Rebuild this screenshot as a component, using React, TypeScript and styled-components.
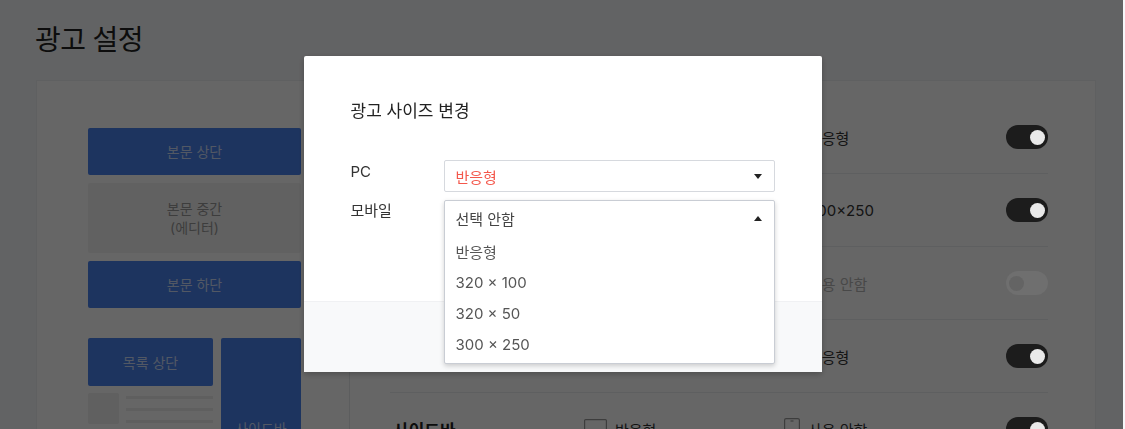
import React from "react";
import styled, { createGlobalStyle } from "styled-components";

const GlobalStyle = createGlobalStyle`
  html, body {
    margin: 0;
    padding: 0;
    width: 1125px;
    height: 429px;
    overflow: hidden;
    background: #f6f7f9;
  }
  body {
    font-family: Inter, "Noto Sans CJK KR", "Noto Sans", sans-serif;
    color: #222;
  }
  * { box-sizing: border-box; }
`;

const Page = styled.div`
  padding: 22px 0 0 35px;
  width: 1125px;
  height: 429px;
  overflow: hidden;
`;

const PageTitle = styled.h1`
  margin: 0 0 22px;
  font-size: 28px;
  line-height: 36px;
  font-weight: 400;
  letter-spacing: -0.6px;
  color: #222;
`;

const Card = styled.div`
  margin-left: 1px;
  width: 1060px;
  height: 480px;
  background: #fff;
  border: 1px solid #edf0f2;
  display: grid;
  grid-template-columns: 313px 1fr;
`;

const Preview = styled.div`
  border-right: 1px solid #e6e9ec;
  padding: 47px 48px 0 51px;
  display: flex;
  flex-direction: column;
`;

const BlockStack = styled.div`
  display: flex;
  flex-direction: column;
  gap: 8px;
`;

const Block = styled.div<{ $h: number; $muted?: boolean }>`
  height: ${(p) => p.$h}px;
  border-radius: 2px;
  background: ${(p) => (p.$muted ? "#f3f3f3" : "#4a82ee")};
  color: ${(p) => (p.$muted ? "#999" : "rgba(255,255,255,0.72)")};
  font-size: 14px;
  line-height: 19px;
  display: flex;
  align-items: center;
  justify-content: center;
  text-align: center;
`;

const ListArea = styled.div`
  margin-top: 30px;
  display: grid;
  grid-template-columns: 125px 80px;
  column-gap: 8px;
  align-items: start;
`;

const ListColumn = styled.div`
  display: flex;
  flex-direction: column;
  gap: 7px;
`;

const ListItem = styled.div`
  display: flex;
  gap: 7px;
`;

const Thumb = styled.div`
  width: 31px;
  height: 31px;
  background: #efefef;
  border-radius: 2px;
`;

const Lines = styled.div`
  flex: 1;
  display: flex;
  flex-direction: column;
  gap: 9px;
  padding-top: 3px;
`;

const Line = styled.div`
  height: 3px;
  background: #eeeeee;
`;

const Settings = styled.div`
  padding: 20px 47px 0 40px;
  display: flex;
  flex-direction: column;
`;

const Row = styled.div`
  height: 73px;
  border-bottom: 1px solid #eceef0;
  display: grid;
  grid-template-columns: 194px 200px 1fr 42px;
  align-items: center;
`;

const RowTitle = styled.div`
  padding-left: 3px;
  font-size: 17px;
  font-weight: 700;
  color: #222;
`;

const Device = styled.div<{ $off?: boolean }>`
  display: flex;
  align-items: center;
  gap: 8px;
  font-size: 15px;
  color: ${(p) => (p.$off ? "#b4b4b4" : "#333")};
`;

const Toggle = styled.div<{ $on: boolean }>`
  position: relative;
  z-index: 20;
  width: 42px;
  height: 24px;
  border-radius: 12px;
  background: ${(p) => (p.$on ? "#1c1c1c" : "#6f6f6f")};
  &::after {
    content: "";
    position: absolute;
    top: 4.5px;
    ${(p) => (p.$on ? "right: 3px;" : "left: 3px;")}
    width: 15px;
    height: 15px;
    border-radius: 50%;
    background: ${(p) => (p.$on ? "#e9e9e9" : "#646464")};
  }
`;

const Overlay = styled.div`
  position: fixed;
  inset: 0 2px 0 0;
  z-index: 10;
  background: rgba(0, 0, 0, 0.6);
  display: flex;
  justify-content: center;
  align-items: flex-start;
  padding: 56px 0 0 2px;
`;

const Modal = styled.div`
  position: relative;
  z-index: 30;
  width: 518px;
  background: #fff;
  border-radius: 2px;
  box-shadow: 0 2px 6px rgba(0, 0, 0, 0.25);
  display: flex;
  flex-direction: column;
`;

const ModalBody = styled.div`
  height: 245px;
  padding: 43px 47px 0;
`;

const ModalTitle = styled.h2`
  margin: 0;
  font-size: 17px;
  line-height: 24px;
  font-weight: 400;
  color: #222;
`;

const Form = styled.div`
  margin-top: 37px;
  display: grid;
  grid-template-columns: 93px 1fr;
  row-gap: 8px;
`;

const Label = styled.div<{ $shift?: number }>`
  font-size: 15px;
  line-height: 24px;
  color: #333;
  margin-top: ${(p) => p.$shift ?? 0}px;
`;

const SelectBox = styled.div<{ $accent?: boolean }>`
  position: relative;
  height: 32px;
  border: 1px solid #d6d9de;
  border-radius: 2px;
  padding: 0 12px 0 11px;
  display: flex;
  align-items: center;
  justify-content: space-between;
  font-size: 15px;
  color: ${(p) => (p.$accent ? "#f4574b" : "#444")};
`;

const SelectAnchor = styled.div`
  position: relative;
  height: 32px;
`;

const Dropdown = styled.div`
  position: absolute;
  top: 0;
  left: 0;
  right: 0;
  z-index: 5;
  background: #fff;
  border: 1px solid #c9cdd4;
  border-radius: 2px;
  box-shadow: 0 2px 5px rgba(0, 0, 0, 0.18);
  padding-bottom: 3px;
`;

const DropHead = styled.div`
  height: 35px;
  padding: 0 12px 0 11px;
  display: flex;
  align-items: center;
  justify-content: space-between;
  font-size: 15px;
  color: #444;
`;

const Option = styled.div`
  height: 31px;
  padding: 0 11px;
  display: flex;
  align-items: center;
  font-size: 15px;
  color: #555;
`;

const Caret = styled.span<{ $up?: boolean }>`
  width: 0;
  height: 0;
  border-left: 4px solid transparent;
  border-right: 4px solid transparent;
  ${(p) =>
    p.$up ? "border-bottom: 5px solid #222;" : "border-top: 5px solid #222;"}
`;

const ModalFooter = styled.div`
  height: 71px;
  background: #f8f9fa;
  border-top: 1px solid #f0f1f3;
`;

const Monitor = () => (
  <svg width="23" height="20" viewBox="0 0 23 20" fill="none" stroke="#999" strokeWidth="1.2">
    <rect x="0.6" y="0.6" width="21.8" height="14" rx="1" />
    <path d="M8 19h7M11.5 15v4" />
  </svg>
);

const Phone = () => (
  <svg width="16" height="22" viewBox="0 0 16 22" fill="none" stroke="#999" strokeWidth="1.2">
    <rect x="0.6" y="0.6" width="14.8" height="20.8" rx="1.5" />
    <path d="M6.5 3h3" />
  </svg>
);

type RowData = { title: string; pc: string; mobile: string; on: boolean; mobileOff?: boolean };

const rows: RowData[] = [
  { title: "본문 상단", pc: "반응형", mobile: "반응형", on: true },
  { title: "본문 중간", pc: "반응형", mobile: "300×250", on: true },
  { title: "본문 하단", pc: "반응형", mobile: "사용 안함", on: false, mobileOff: true },
  { title: "목록 상단", pc: "반응형", mobile: "반응형", on: true },
  { title: "사이드바", pc: "반응형", mobile: "사용 안함", on: true },
];

const options = ["반응형", "320 × 100", "320 × 50", "300 × 250"];

export default function App() {
  return (
    <>
      <GlobalStyle />
      <Page>
        <PageTitle>광고 설정</PageTitle>
        <Card>
          <Preview>
            <BlockStack>
              <Block $h={47}>본문 상단</Block>
              <Block $h={70} $muted>
                본문 중간
                <br />
                (에디터)
              </Block>
              <Block $h={47}>본문 하단</Block>
            </BlockStack>
            <ListArea>
              <ListColumn>
                <Block $h={48}>목록 상단</Block>
                <ListItem>
                  <Thumb />
                  <Lines>
                    <Line />
                    <Line />
                    <Line />
                  </Lines>
                </ListItem>
              </ListColumn>
              <Block $h={180}>사이드바</Block>
            </ListArea>
          </Preview>
          <Settings>
            {rows.map((r) => (
              <Row key={r.title}>
                <RowTitle>{r.title}</RowTitle>
                <Device>
                  <Monitor />
                  {r.pc}
                </Device>
                <Device $off={r.mobileOff}>
                  <Phone />
                  {r.mobile}
                </Device>
                <Toggle $on={r.on} />
              </Row>
            ))}
          </Settings>
        </Card>
      </Page>
      <Overlay>
        <Modal>
          <ModalBody>
            <ModalTitle>광고 사이즈 변경</ModalTitle>
            <Form>
              <Label>PC</Label>
              <SelectBox $accent>
                반응형
                <Caret />
              </SelectBox>
              <Label $shift={-1}>모바일</Label>
              <SelectAnchor>
                <Dropdown>
                  <DropHead>
                    선택 안함
                    <Caret $up />
                  </DropHead>
                  {options.map((o) => (
                    <Option key={o}>{o}</Option>
                  ))}
                </Dropdown>
              </SelectAnchor>
            </Form>
          </ModalBody>
          <ModalFooter />
        </Modal>
      </Overlay>
    </>
  );
}
